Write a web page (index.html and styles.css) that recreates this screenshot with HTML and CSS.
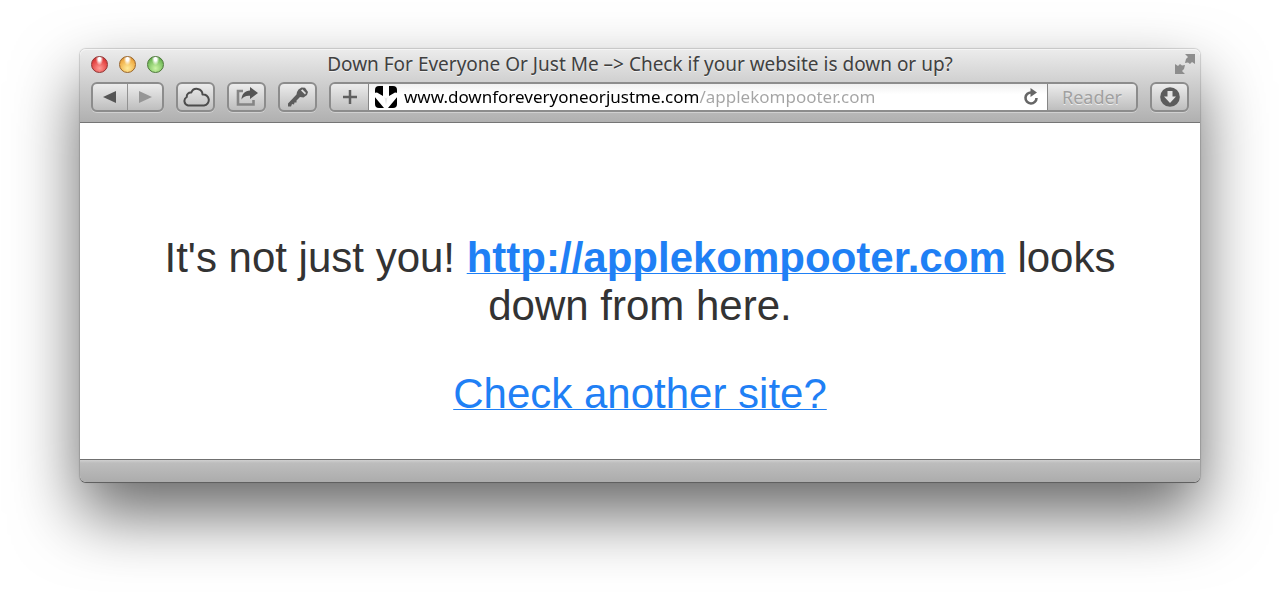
FILE: index.html
```html
<!DOCTYPE html>
<html lang="en">
<head>
<meta charset="utf-8">
<title>Down For Everyone Or Just Me -&gt; Check if your website is down or up?</title>
<link rel="stylesheet" href="styles.css">
</head>
<body>
<div class="window">
  <header class="chrome">
    <div class="titlebar">
      <div class="lights">
        <button class="light red" type="button" aria-label="Close"></button>
        <button class="light yellow" type="button" aria-label="Minimize"></button>
        <button class="light green" type="button" aria-label="Zoom"></button>
      </div>
      <div class="title">Down For Everyone Or Just Me –&gt; Check if your website is down or up?</div>
      <button class="fullscreen" type="button" aria-label="Full screen">
        <svg width="20" height="20" viewBox="0 0 20 20" fill="#8d8d8d"><path d="M10 0H20V10L17 8L15 10L13 8.500L10 9L11 5L13 3Z"/><path d="M0 10L3 12L5 10L7 11.500L10 11L9 15L7 17L10 20H0Z"/></svg>
      </button>
    </div>
    <div class="toolbar">
      <div class="pair">
        <button class="half" type="button" aria-label="Back"><svg width="14" height="12" viewBox="0 0 14 12"><path d="M13 0V12L0 6Z" fill="#555"/></svg></button>
        <button class="half" type="button" aria-label="Forward"><svg width="14" height="12" viewBox="0 0 14 12"><path d="M1 0V12L14 6Z" fill="#969696"/></svg></button>
      </div>
      <button class="btn" type="button" aria-label="iCloud tabs"><svg width="28" height="20" viewBox="0 0 28 20"><path d="M6 18.500A4.600 4.600 0 0 1 4.800 10A4 4 0 0 1 9.300 5.500A5.800 5.800 0 0 1 20.500 7.500A5.500 5.500 0 1 1 22 18.500Z" fill="none" stroke="#4c4c4c" stroke-width="2" stroke-linejoin="round"/></svg></button>
      <button class="btn" type="button" aria-label="Share"><svg width="24" height="20" viewBox="0 0 24 20"><path d="M8 4H3V17.500H18.500V13" fill="none" stroke="#858585" stroke-width="2.600"/><path d="M15 0L23 6L15 12V8.800C11 8.500 8.500 9.500 6.500 12.500C6.800 7 10 3.700 15 3.500Z" fill="#555"/></svg></button>
      <button class="btn" type="button" aria-label="Passwords"><svg width="22" height="22" viewBox="0 0 22 22"><path fill-rule="evenodd" d="M11.500 3.500L14.500 1.500L18 1.700L21 6L20 9L16.500 11.500L13 11L9.500 14.500L9.500 16.500L7.500 16.500L7 18.500L5 18L4 20.500H1V17.500L9.500 8.500L10 6ZM15.300 3.300L14 4.500L18 8.500L19 7Z" fill="#5c5c5c"/></svg></button>
      <form class="address">
        <button class="add" type="button" aria-label="Add bookmark"><svg width="14" height="14" viewBox="0 0 14 14"><path d="M7 0V14M0 7H14" stroke="#606060" stroke-width="2.500"/></svg></button>
        <div class="field">
          <svg width="24" height="24" viewBox="0 0 24 24"><rect x="1" y="1" width="22" height="22" rx="4" fill="#000"/><path d="M9 0H15V11L21 7.500L24 8V11L14 23H10L0 11V8L3 7.500L9 11Z" fill="#fff"/><path d="M10.500 12L12 13.500L13.500 12L12 20Z" fill="#e4e4e4"/></svg>
          <input class="url" type="text" aria-label="Address" value="www.downforeveryoneorjustme.com/applekompooter.com">
          <button class="reload" type="button" aria-label="Reload"><svg width="16" height="18" viewBox="0 0 16 18"><path d="M13.500 10A5.500 5.500 0 1 1 8.500 4.500" fill="none" stroke="#666" stroke-width="2.600"/><path d="M7.500 0L14 4.500L7.500 9Z" fill="#666"/></svg></button>
        </div>
        <button class="reader" type="button">Reader</button>
      </form>
      <button class="btn" type="button" aria-label="Downloads"><svg width="20" height="20" viewBox="0 0 20 20"><circle cx="10" cy="10" r="9.800" fill="#5c5c5c"/><path d="M7.500 4H12.500V9.500H16L10 16L4 9.500H7.500Z" fill="#e4e4e4"/></svg></button>
    </div>
  </header>
  <main class="page">
    <p class="verdict">It's not just you! <a class="site" href="#">http://applekompooter.com</a> looks down from here.</p>
    <p class="verdict"><a href="#">Check another site?</a></p>
  </main>
  <footer class="statusbar"></footer>
</div>
</body>
</html>
```
FILE: styles.css
```css
* { box-sizing: border-box; }

body {
  margin: 0;
  min-height: 100vh;
  padding: 49px 80px 110px;
  display: flex;
  flex-direction: column;
  background: #fff;
  font-family: "Noto Sans", "Open Sans", sans-serif;
}

button {
  margin: 0;
  padding: 0;
  border: 0;
  background: none;
  font: inherit;
  display: flex;
  align-items: center;
  justify-content: center;
}

svg { flex: none; }

.window {
  flex: 1;
  display: flex;
  flex-direction: column;
  border-radius: 6px;
  background: #fff;
  box-shadow: 0 0 1px 1px rgba(0, 0, 0, 0.15), 0 32px 66px rgba(0, 0, 0, 0.6);
}

.chrome {
  display: flex;
  flex-direction: column;
  padding: 0 11px 10px;
  border-radius: 6px 6px 0 0;
  border-bottom: 1px solid #757575;
  background: linear-gradient(#ececec, #d0d0d0 45%, #b0b0b0);
  box-shadow: inset 0 1px #f5f5f5;
}

.titlebar {
  display: grid;
  grid-template-columns: 1fr auto 1fr;
  align-items: center;
  height: 33px;
  padding-bottom: 3px;
}

.lights { display: flex; gap: 11px; }

.light {
  width: 17px;
  height: 17px;
  border-radius: 50%;
  border: 1px solid;
}

.red {
  border-color: #8f3433;
  background: radial-gradient(ellipse at 50% 12%, #fff 0 12%, transparent 35%), radial-gradient(circle at 50% 75%, #ff9a94, #e2403f 65%, #b32c2d);
}

.yellow {
  border-color: #99652a;
  background: radial-gradient(ellipse at 50% 12%, #fff 0 12%, transparent 35%), radial-gradient(circle at 50% 75%, #ffeb9b, #f0ad45 65%, #bb7727);
}

.green {
  border-color: #4c7838;
  background: radial-gradient(ellipse at 50% 12%, #fff 0 12%, transparent 35%), radial-gradient(circle at 50% 75%, #cbf5a5, #76bd5c 65%, #4c8c3a);
}

.title {
  font-size: 19px;
  line-height: 24px;
  color: #404040;
  text-shadow: 0 1px #f0f0f0;
}

.fullscreen {
  justify-self: end;
  margin-right: -6px;
}

.toolbar {
  display: flex;
  gap: 12px;
  height: 30px;
}

.pair,
.btn,
.address {
  border: 2px solid #8c8c8c;
  border-radius: 6px;
  box-shadow: 0 1px #d0d0d0;
}

.pair,
.btn,
.add,
.reader {
  background: linear-gradient(#ececec, #bebebe);
}

.pair { display: flex; width: 73px; }

.half { flex: 1; }

.half + .half { border-left: 1px solid #929292; }

.btn { width: 39px; }

.address {
  flex: 1;
  display: flex;
  overflow: hidden;
}

.add { width: 38px; border-right: 1px solid #868686; }

.field {
  flex: 1;
  display: flex;
  align-items: center;
  gap: 6px;
  padding: 0 8px 0 5px;
  background: linear-gradient(#f0f0f0, #fff 40%);
}

.url {
  flex: 1;
  min-width: 0;
  padding: 0;
  border: 0;
  outline: 0;
  font: 17px/24px "Noto Sans", "Open Sans", sans-serif;
  color: transparent;
  background: linear-gradient(90deg, #000 295px, #a4a4a4 295px);
  -webkit-background-clip: text;
  background-clip: text;
}

.reader {
  width: 89px;
  border-left: 1px solid #868686;
  font-size: 18px;
  line-height: 24px;
  color: #a0a0a0;
  text-shadow: 0 1px #eee;
}

.page {
  flex: 1;
  padding: 111px 80px 40px;
  display: flex;
  flex-direction: column;
  gap: 40px;
  font-family: "Liberation Sans", Arial, sans-serif;
}

.verdict {
  margin: 0;
  font-size: 42px;
  line-height: 48px;
  text-align: center;
  color: #333;
}

.verdict a {
  color: #1f80f5;
  text-decoration-thickness: 1px;
  text-underline-offset: 1px;
  text-decoration-skip-ink: none;
}

.site { font-weight: bold; }

.statusbar {
  height: 23px;
  border-top: 1px solid #707070;
  border-radius: 0 0 6px 6px;
  background: linear-gradient(#d0d0d0, #bdbdbd 3px, #acacac);
  box-shadow: 0 1px #606060;
}
```
